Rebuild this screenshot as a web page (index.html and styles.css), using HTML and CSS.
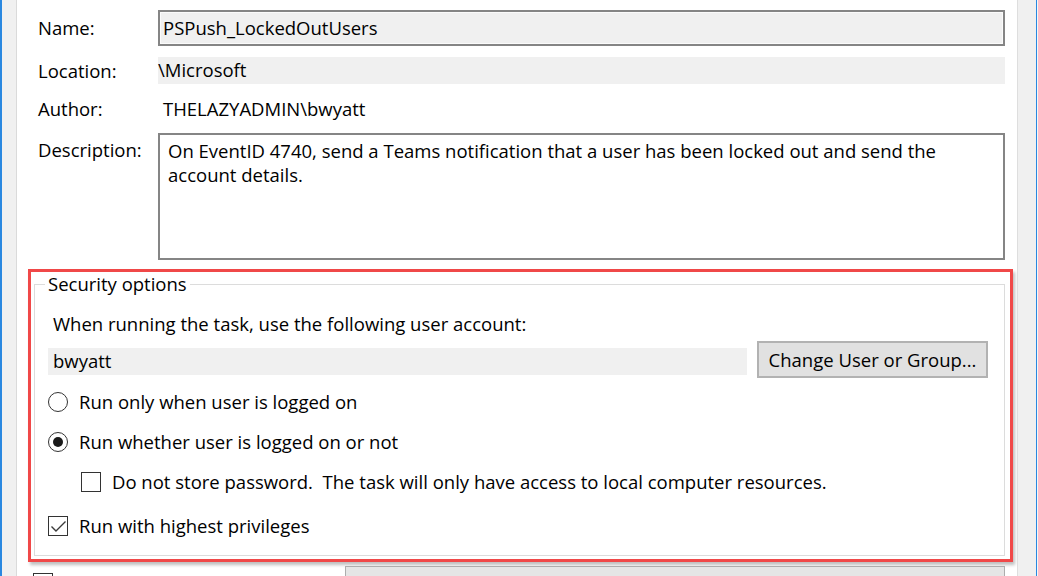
FILE: index.html
```html
<!DOCTYPE html>
<html lang="en">
<head>
<meta charset="utf-8">
<title>Task Properties - General</title>
<link rel="stylesheet" href="styles.css">
</head>
<body>
<div class="window">
  <div class="rail rail-left"></div>
  <main class="panel">
    <div class="row row-name">
      <span class="label">Name:</span>
      <div class="field field-name">PSPush_LockedOutUsers</div>
    </div>
    <div class="row row-location">
      <span class="label">Location:</span>
      <div class="field field-band">\Microsoft</div>
    </div>
    <div class="row row-author">
      <span class="label">Author:</span>
      <div class="field field-plain">THELAZYADMIN\bwyatt</div>
    </div>
    <div class="row row-desc">
      <span class="label label-top">Description:</span>
      <div class="field field-desc">
        <span class="line">On EventID 4740, send a Teams notification that a user has been locked out and send the</span>
        <span class="line">account details.</span>
      </div>
    </div>
    <div class="highlight">
      <fieldset class="group">
        <legend class="group-title">Security options</legend>
        <p class="account-label">When running the task, use the following user account:</p>
        <div class="account-row">
          <div class="account-field">bwyatt</div>
          <button class="btn" type="button">Change User or Group...</button>
        </div>
        <div class="option opt-1"><span class="radio"></span>Run only when user is logged on</div>
        <div class="option opt-2"><span class="radio radio-on"></span>Run whether user is logged on or not</div>
        <div class="option opt-3"><span class="checkbox"></span>Do not store password.&nbsp; The task will only have access to local computer resources.</div>
        <div class="option opt-4"><span class="checkbox"><svg class="tick" viewBox="0 0 17 17" width="17" height="17"><path d="M1.5 8.5 L6 13 L15.5 3.5" fill="none" stroke="#3a3a3a" stroke-width="1.4"/></svg></span>Run with highest privileges</div>
      </fieldset>
    </div>
    <div class="row row-bottom">
      <span class="checkbox checkbox-cut"></span>
      <div class="combo"></div>
    </div>
  </main>
  <div class="rail rail-right"></div>
</div>
</body>
</html>
```

FILE: styles.css
```css
html, body {
  margin: 0;
  padding: 0;
  height: 576px;
  overflow: hidden;
  background: #ffffff;
}

body {
  font-family: "Open Sans", "Noto Sans", sans-serif;
  font-size: 18.5px;
  line-height: 24px;
  color: #000000;
}

.window {
  display: flex;
  height: 576px;
}

.rail {
  flex: none;
  box-sizing: border-box;
  height: 100%;
}

.rail-left {
  width: 17px;
  background: #f0f0f0;
  border-left: 2px solid #2a88e0;
  border-right: 1px solid #dadada;
}

.rail-right {
  width: 21px;
  border-left: 1px solid #dedede;
  background: linear-gradient(to right, #f0f0f0 0, #f0f0f0 18px, #2a88e0 18px, #2a88e0 19.5px, #f6f6f6 19.5px);
}

.panel {
  flex: 1;
  min-width: 0;
  background: #ffffff;
  padding: 10px 12px 0 21px;
  display: flex;
  flex-direction: column;
}

.row {
  display: flex;
  align-items: center;
  flex: none;
}

.label {
  width: 120px;
  flex: none;
}

.field {
  flex: 1;
  min-width: 0;
  box-sizing: border-box;
}

.field-name {
  height: 36px;
  border: 2px solid #858585;
  box-shadow: inset 0 0 0 1px #fbfbfb;
  background: #f0f0f0;
  padding-left: 3px;
  display: flex;
  align-items: center;
}

.row-location {
  margin-top: 11px;
}

.field-band {
  height: 27px;
  line-height: 25px;
  background: #f0f0f0;
}

.row-author {
  margin-top: 13px;
  height: 24px;
}

.field-plain {
  padding-left: 5px;
}

.row-desc {
  margin-top: 12px;
  align-items: flex-start;
}

.label-top {
  margin-top: 5px;
}

.field-desc {
  height: 127px;
  border: 2px solid #858585;
  background: #ffffff;
  padding: 4px 8px;
}

.line {
  display: block;
  white-space: nowrap;
}

.highlight {
  flex: none;
  margin: 9px -8px 0 -10px;
  border: 3px solid #f04848;
  box-shadow: 2px 3px 3px rgba(0, 0, 0, 0.25);
  background: #ffffff;
}

.group {
  margin: 0 5px 3px 3px;
  border: 1px solid #dcdcdc;
  padding: 0 0 17px 13px;
  min-inline-size: 0;
}

.group-title {
  padding: 0 3px;
  margin-left: -3px;
  line-height: 24px;
}

.account-label {
  margin: 16px 0 0 5px;
}

.account-row {
  display: flex;
  align-items: flex-start;
  margin-top: 5px;
}

.account-field {
  width: 699px;
  height: 27px;
  margin-top: 7px;
  box-sizing: border-box;
  background: #f0f0f0;
  padding-left: 5px;
  line-height: 26px;
}

.btn {
  margin-left: 10px;
  width: 231px;
  height: 37px;
  box-sizing: border-box;
  background: #e1e1e1;
  border: 2px solid #b2b2b2;
  padding: 0;
  font: inherit;
  color: #000000;
}

.option {
  display: flex;
  align-items: center;
  height: 24px;
}

.opt-1 { margin-top: 12px; }
.opt-2 { margin-top: 16px; }
.opt-3 { margin-top: 16px; padding-left: 33px; }
.opt-4 { margin-top: 20px; }

.radio {
  position: relative;
  flex: none;
  width: 20px;
  height: 20px;
  box-sizing: border-box;
  border: 1.5px solid #333333;
  border-radius: 50%;
  margin-right: 11px;
}

.radio-on::after {
  content: "";
  position: absolute;
  left: 3.5px;
  top: 3.5px;
  width: 10px;
  height: 10px;
  border-radius: 50%;
  background: #1a1a1a;
}

.checkbox {
  flex: none;
  width: 20px;
  height: 20px;
  box-sizing: border-box;
  border: 1.5px solid #333333;
  margin-right: 11px;
  display: flex;
  align-items: center;
  justify-content: center;
}

.tick {
  display: block;
}

.row-bottom {
  margin-top: 4px;
  height: 30px;
  align-items: flex-start;
}

.checkbox-cut {
  margin: 7px 0 0 -5px;
}

.combo {
  flex: none;
  width: 660px;
  height: 30px;
  margin-left: auto;
  box-sizing: border-box;
  border: 1px solid #adadad;
  background: #e5e5e5;
}
```
